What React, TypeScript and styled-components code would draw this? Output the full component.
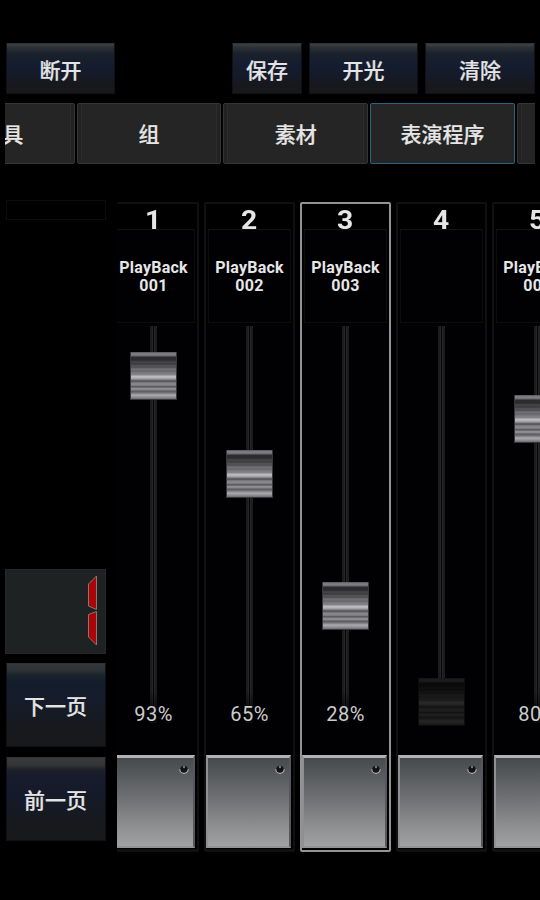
import React from "react";
import styled, { createGlobalStyle, css } from "styled-components";

const GlobalStyle = createGlobalStyle`
  *, *::before, *::after { box-sizing: border-box; }
  body {
    margin: 0;
    background: #000;
    color: #e6e6e6;
    font-family: Roboto, "Noto Sans CJK SC", sans-serif;
    overflow: hidden;
  }
`;

const Screen = styled.div`
  width: 540px;
  height: 900px;
  padding-top: 43px;
  background: #000;
  overflow: hidden;
  display: flex;
  flex-direction: column;
`;

const Toolbar = styled.header`
  display: flex;
  gap: 7px;
  height: 51px;
  padding: 0 5px 0 6px;
`;

const Spacer = styled.div`
  flex: 1;
`;

const ConsoleButton = styled.button<{ $width: number; $height: number; $warm?: boolean }>`
  width: ${(p) => p.$width}px;
  height: ${(p) => p.$height}px;
  flex: none;
  padding: 1px 0 0;
  border: 1px solid #101114;
  border-top: 1px solid #303234;
  background: ${(p) =>
    p.$height > 60
      ? p.$warm
        ? "linear-gradient(#3a3a3b 0, #343537 7px, #1f2228 11px, #171b2c 18px, #151a2a 38px, #17191d 64px, #18191b)"
        : "linear-gradient(#34383a 0, #2c3134 7px, #1a242b 11px, #131d2c 18px, #151b29 38px, #17191d 64px, #18191b)"
      : "linear-gradient(#3c4042 0, #2a2f34 4px, #1a212c 10px, #141c30 22px, #161a28 32px, #17181c 42px, #19191a)"};
  color: #e4e4e4;
  font: 500 21px "Noto Sans CJK SC", sans-serif;
  line-height: 1;
  white-space: nowrap;
  -webkit-text-stroke: 0.2px #e4e4e4;
`;

const TabBar = styled.nav`
  display: flex;
  gap: 2px;
  height: 61px;
  margin: 9px 5px 0;
  overflow: hidden;
`;

const Tab = styled.div<{ $active?: boolean; $first?: boolean }>`
  flex: 0 0 144.7px;
  margin-left: ${(p) => (p.$first ? "-75px" : "0")};
  display: flex;
  align-items: center;
  justify-content: center;
  padding-bottom: 1px;
  border: 1px solid ${(p) => (p.$active ? "#286481" : "#353535")};
  border-radius: 2px;
  background: #252525;
  box-shadow: ${(p) => (p.$active ? "none" : "inset 3px 0 #222, inset -3px 0 #222, inset 4px 0 #2c2c2c, inset -4px 0 #2c2c2c")};
  font: 500 21px "Noto Sans CJK SC", sans-serif;
  white-space: nowrap;
  -webkit-text-stroke: 0.2px #e4e4e4;
`;

const Desk = styled.main`
  display: flex;
  justify-content: space-between;
  margin-top: 36px;
  padding-left: 5px;
`;

const Sidebar = styled.aside`
  width: 101px;
  height: 652px;
  display: flex;
  flex-direction: column;
  align-items: center;
`;

const MasterSlot = styled.div`
  width: 100px;
  height: 20px;
  border: 1px solid #0d0d0e;
`;

const PageDisplay = styled.div`
  width: 101px;
  height: 85px;
  margin: 349px 0 9px;
  padding: 5px 7px 0 0;
  display: flex;
  justify-content: flex-end;
  align-items: flex-start;
  border: 1px solid #252929;
  background: #1e2222;
`;

const PageButtons = styled.div`
  display: flex;
  flex-direction: column;
  gap: 10px;
`;

const Strips = styled.section`
  width: 423px;
  height: 650px;
  margin-top: 2px;
  overflow: hidden;
  display: flex;
  gap: 5px;
`;

const Strip = styled.article<{ $selected?: boolean; $first?: boolean }>`
  flex: 0 0 91px;
  height: 650px;
  margin-left: ${(p) => (p.$first ? "-9px" : "0")};
  padding: 0 2px;
  display: flex;
  flex-direction: column;
  border: 2px solid #101011;
  border-bottom-width: 3px;
  border-radius: 2px;
  background: #010104;
  ${(p) =>
    p.$selected &&
    css`
      border-color: #939393;
      border-bottom-width: 2px;
    `}
`;

const StripNumber = styled.div`
  height: 26px;
  display: flex;
  justify-content: center;
  border-bottom: 1px solid #121213;
  background: #000;
  font-size: 25px;
  font-weight: 700;
  line-height: 33px;

  span { transform: scaleX(1.13); }
`;

const StripName = styled.div`
  height: 93px;
  padding-top: 2px;
  display: flex;
  align-items: center;
  justify-content: center;
  border: 1px solid #0c0c0d;
  border-top: 0;
  font-size: 16px;
  font-weight: 700;
  line-height: 18px;
  letter-spacing: 0.25px;
  text-align: center;
  white-space: pre;
`;

const Fader = styled.div`
  position: relative;
  height: 432px;
  display: flex;
  justify-content: center;
`;

const Track = styled.div`
  width: 7px;
  height: 397px;
  margin-top: 3px;
  border: solid #1c1c1d;
  border-width: 0 2px;
  background: #050506;
  box-shadow: inset 1px 0 #262627, inset -1px 0 #262627;
  mask-image: linear-gradient(#000 365px, rgba(0, 0, 0, 0.35) 385px);
`;

const Knob = styled.div<{ $top: number; $idle?: boolean }>`
  position: absolute;
  top: ${(p) => p.$top}px;
  left: 18px;
  width: 47px;
  height: 48px;
  border: 1px solid #38383a;
  border-width: 0 1px 1px;
  background: linear-gradient(
    #55565a 0, #85858a 2px, #68686c 4px, #2d2d30 5px,
    #2b2b2e 8px, #47474a 10px, #39393c 12px, #5a5a5e 14px,
    #48484c 15px, #737377 17px, #66666a 19px, #7b7b80 21px,
    #85858a 23px, #bdbdc1 24px, #b2b2b6 26px, #77777b 28px,
    #4c4c50 29px, #84848a 31px, #88888d 33px, #4c4c51 35px,
    #8e8e93 36px, #88888d 38px, #56565b 39px, #77777c 41px,
    #abacaf 43px, #929296 45px, #5a5a5e 48px
  );
  filter: ${(p) => (p.$idle ? "brightness(0.22)" : "none")};
`;

const Level = styled.span`
  position: absolute;
  top: 380px;
  width: 100%;
  text-align: center;
  font-size: 20px;
  letter-spacing: 0.5px;
  line-height: 22px;
  color: #ccc;
`;

const FlashPad = styled.div`
  height: 93px;
  margin: 0 0 0 -2px;
  padding: 8px 3px;
  display: flex;
  justify-content: flex-end;
  align-items: flex-start;
  border: 2px solid;
  border-color: #b0b2b3 #55575a #929395 #8e9092;
  border-top-width: 3px;
  background: linear-gradient(#464a4d, #5c5f62 25%, #77797b 55%, #929395 82%, #a0a1a3);
`;

const Led = styled.svg`
  width: 12px;
  height: 12px;
  margin-top: -2px;
`;

type Playback = { id: string; name: string; top: number; level?: string };

const playbacks: Playback[] = [
  { id: "1", name: "PlayBack\n001", top: 29, level: "93%" },
  { id: "2", name: "PlayBack\n002", top: 127, level: "65%" },
  { id: "3", name: "PlayBack\n003", top: 259, level: "28%" },
  { id: "4", name: "", top: 355 },
  { id: "5", name: "PlayBack\n005", top: 72, level: "80%" },
];

const tabs = ["工具", "组", "素材", "表演程序", ""];

function PlaybackStrip({ playback, first, selected }: { playback: Playback; first: boolean; selected: boolean }) {
  return (
    <Strip $first={first} $selected={selected}>
      <StripNumber><span>{playback.id}</span></StripNumber>
      <StripName>{playback.name}</StripName>
      <Fader>
        <Track />
        <Knob $top={playback.top} $idle={!playback.level} />
        {playback.level && <Level>{playback.level}</Level>}
      </Fader>
      <FlashPad>
        <Led viewBox="0 0 12 12">
          <circle cx="6" cy="5.5" r="3.8" fill="#101214" />
          <path d="M1.8 5.2A4.2 4.2 0 0 0 10.2 5.2" fill="none" stroke="#a8acae" strokeWidth="1.2" />
          <circle cx="6" cy="3" r="1.2" fill="#74797c" />
        </Led>
      </FlashPad>
    </Strip>
  );
}

export default function App() {
  return (
    <>
      <GlobalStyle />
      <Screen>
        <Toolbar>
          <ConsoleButton $width={109} $height={51}>断开</ConsoleButton>
          <Spacer />
          <ConsoleButton $width={70} $height={51}>保存</ConsoleButton>
          <ConsoleButton $width={109} $height={51}>开光</ConsoleButton>
          <ConsoleButton $width={110} $height={51}>清除</ConsoleButton>
        </Toolbar>
        <TabBar>
          {tabs.map((label, i) => (
            <Tab key={i} $first={i === 0} $active={i === 3}>{label}</Tab>
          ))}
        </TabBar>
        <Desk>
          <Sidebar>
            <MasterSlot />
            <PageDisplay>
              <svg width="11" height="72" viewBox="0 0 11 72">
                <path d="M9.5 1 L1.5 9 V31 L9.5 34.5 Z" fill="#ac0308" stroke="#8a7770" strokeWidth="1" />
                <path d="M9.5 70 L1.5 62 V39.5 L9.5 36.5 Z" fill="#ac0308" stroke="#8a7770" strokeWidth="1" />
              </svg>
            </PageDisplay>
            <PageButtons>
              <ConsoleButton $width={100} $height={84}>下一页</ConsoleButton>
              <ConsoleButton $width={100} $height={84} $warm>前一页</ConsoleButton>
            </PageButtons>
          </Sidebar>
          <Strips>
            {playbacks.map((p, i) => (
              <PlaybackStrip key={p.id} playback={p} first={i === 0} selected={p.id === "3"} />
            ))}
          </Strips>
        </Desk>
      </Screen>
    </>
  );
}
